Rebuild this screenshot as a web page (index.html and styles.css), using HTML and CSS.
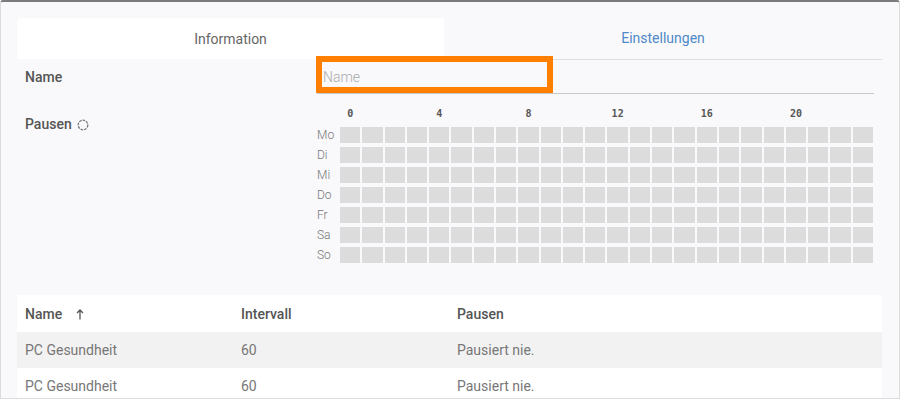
FILE: index.html
```html
<!DOCTYPE html>
<html lang="de">
<head>
<meta charset="utf-8">
<title>Pausen</title>
<link rel="stylesheet" href="styles.css">
</head>
<body>
<div class="window">
  <div class="tabs">
    <div class="tab tab-active">Information</div>
    <div class="tab tab-link">Einstellungen</div>
  </div>

  <div class="form-row name-row">
    <div class="label">Name</div>
    <div class="input-wrap">
      <input class="text-input" type="text" placeholder="Name">
      <div class="highlight"></div>
    </div>
  </div>

  <div class="form-row pause-row">
    <div class="label pause-label">Pausen
      <svg class="spin-icon" width="12" height="12" viewBox="0 0 12 12"><circle cx="6" cy="6" r="4.8" fill="none" stroke="#777" stroke-width="1.3" stroke-dasharray="2.6 1"/></svg>
    </div>
    <div class="schedule">
      <div class="hours">
        <span class="hour">0</span><span></span><span></span><span></span>
        <span class="hour">4</span><span></span><span></span><span></span>
        <span class="hour">8</span><span></span><span></span><span></span>
        <span class="hour">12</span><span></span><span></span><span></span>
        <span class="hour">16</span><span></span><span></span><span></span>
        <span class="hour">20</span><span></span><span></span><span></span>
      </div>
      <div class="day-rows" id="days"></div>
    </div>
  </div>

  <table class="list">
    <thead>
      <tr>
        <th class="col-a">Name <svg class="sort" width="8" height="11" viewBox="0 0 8 11"><path d="M4 10.5V1M1 4L4 1 7 4" fill="none" stroke="#555" stroke-width="1.3"/></svg></th>
        <th class="col-b">Intervall</th>
        <th>Pausen</th>
      </tr>
    </thead>
    <tbody>
      <tr class="odd"><td>PC Gesundheit</td><td>60</td><td>Pausiert nie.</td></tr>
      <tr><td>PC Gesundheit</td><td>60</td><td>Pausiert nie.</td></tr>
    </tbody>
  </table>
</div>
<script>
  (function () {
    var days = ["Mo", "Di", "Mi", "Do", "Fr", "Sa", "So"];
    var host = document.getElementById("days");
    days.forEach(function (d) {
      var row = document.createElement("div");
      row.className = "day-row";
      var l = document.createElement("span");
      l.className = "day";
      l.textContent = d;
      row.appendChild(l);
      var cells = document.createElement("div");
      cells.className = "cells";
      for (var i = 0; i < 24; i++) {
        var c = document.createElement("span");
        c.className = "cell";
        cells.appendChild(c);
      }
      row.appendChild(cells);
      host.appendChild(row);
    });
  })();
</script>
</body>
</html>
```

FILE: styles.css
```css
html, body {
  margin: 0;
  padding: 0;
  background: #ffffff;
}

.window {
  box-sizing: border-box;
  width: 900px;
  height: 399px;
  overflow: hidden;
  background: #f9f9fb;
  border: 1px solid #dcdcdc;
  border-top: 2px solid #7b7b7b;
  border-radius: 3px 3px 0 0;
  padding: 16px 17px 0 16px;
  font-family: Roboto, "Liberation Sans", sans-serif;
  font-size: 14px;
  color: #666;
}

.tabs {
  display: flex;
  align-items: flex-start;
  height: 42px;
}

.tab {
  box-sizing: border-box;
  height: 41px;
  display: flex;
  align-items: center;
  justify-content: center;
}

.tab-active {
  width: 427px;
  background: #ffffff;
  border-radius: 4px 4px 0 0;
  color: #666;
}

.tab-link {
  flex: 1;
  height: 42px;
  border-bottom: 1px solid #dedede;
  color: #4f89c7;
  padding-bottom: 1px;
}

.form-row {
  display: flex;
}

.label {
  width: 292px;
  padding-left: 8px;
  font-weight: 500;
  color: #555;
}

.name-row {
  height: 34px;
}

.name-row .label {
  display: flex;
  align-items: center;
}

.input-wrap {
  position: relative;
  width: 557px;
}

.text-input {
  box-sizing: border-box;
  width: 100%;
  height: 34px;
  border: 0;
  border-bottom: 1px solid #c8c8c8;
  background: transparent;
  padding: 0 6px;
  font-family: Roboto, "Liberation Sans", sans-serif;
  font-size: 14px;
  font-weight: 300;
  color: #555;
  outline: none;
}

.text-input::placeholder {
  color: #a9a9a9;
}

.highlight {
  position: absolute;
  left: -1px;
  top: -4px;
  width: 237px;
  height: 37px;
  box-sizing: border-box;
  border: 6px solid #ff8000;
  pointer-events: none;
}

.pause-row {
  padding-top: 13px;
}

.pause-label {
  line-height: 20px;
  padding-top: 7px;
  display: flex;
  align-items: center;
  gap: 5px;
  height: 20px;
}

.spin-icon {
  display: block;
  margin-top: 1px;
}

.schedule {
  width: 556px;
}

.hours {
  margin-left: 23px;
  display: grid;
  grid-template-columns: repeat(24, 1fr);
  column-gap: 2px;
  height: 13px;
  margin-bottom: 7px;
  font-family: "DejaVu Sans Mono", monospace;
  font-weight: bold;
  font-size: 10px;
  line-height: 13px;
  color: #555;
}

.hour {
  text-align: center;
  white-space: nowrap;
}

.day-rows {
  display: flex;
  flex-direction: column;
  gap: 4px;
}

.day-row {
  display: flex;
  align-items: center;
  height: 16px;
}

.day {
  width: 23px;
  font-size: 12px;
  font-weight: 300;
  color: #777;
  line-height: 16px;
}

.cells {
  flex: 1;
  display: grid;
  grid-template-columns: repeat(24, 1fr);
  column-gap: 2px;
  height: 16px;
}

.cell {
  background: #dcdcdc;
}

.list {
  margin-top: 32px;
  width: 865px;
  border-collapse: collapse;
  background: #ffffff;
  table-layout: fixed;
}

.list th,
.list td {
  text-align: left;
  padding: 0 8px;
  white-space: nowrap;
}

.list th {
  height: 37px;
  font-weight: 500;
  color: #555;
}

.list td {
  height: 36px;
  color: #777;
  font-weight: 400;
}

.col-a,
.col-b {
  width: 200px;
}

.sort {
  margin-left: 10px;
  vertical-align: -1px;
}

.odd {
  background: #f2f2f2;
}
```
